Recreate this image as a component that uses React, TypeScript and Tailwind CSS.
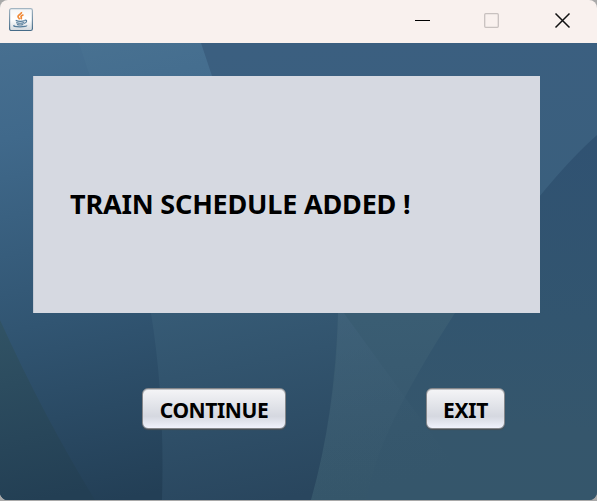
import React from "react";

function JavaIcon() {
  return (
    <svg width="24" height="24" viewBox="0 0 24 24" fill="none">
      <defs>
        <linearGradient id="tile" x1="0" y1="0" x2="0" y2="1">
          <stop offset="0" stopColor="#f4f5f6" />
          <stop offset="0.5" stopColor="#ffffff" />
          <stop offset="1" stopColor="#d3d8dd" />
        </linearGradient>
        <linearGradient id="tileEdge" x1="0" y1="0" x2="0" y2="1">
          <stop offset="0" stopColor="#a3b5c2" />
          <stop offset="1" stopColor="#456b88" />
        </linearGradient>
      </defs>
      <rect x="0.6" y="0.6" width="22.8" height="21.9" rx="1.8" fill="url(#tile)" stroke="url(#tileEdge)" strokeWidth="1.2" />
      <path d="M12.5 4c.5 2-3.800 2.900-3.500 4.700.200 1.100 1.300 1.700 1.700 2.600M14.500 6.800c-1.700.700-3 1.400-2.300 2.500.500.800.300 1.300-.300 2" stroke="#f08a38" strokeWidth="1.700" />
      <path d="M6.700 12.400c2.500 1 7 .900 9.400.100M7.200 14.600c2.200.700 5.700.700 7.800 0M8 16.500c2 .600 4.500.600 6.300 0M15.800 12.200c2.400-.600 2.600 2.300-.600 3.100M5.500 17.200c-2.400.900.800 1.600 5.500 1.600 4 0 7-.500 6.700-1.500" stroke="#557d9b" strokeWidth="1.200" />
    </svg>
  );
}

function TitleBar() {
  return (
    <header className="relative flex h-[43px] shrink-0 items-start bg-[#f9f1ee] pl-[9px] pt-2">
      <JavaIcon />
      <div className="ml-auto flex pr-[26px] pt-[4px]">
        <svg width="156" height="17" viewBox="0 0 156 17" fill="none">
          <path d="M0 8.500h15" stroke="#000" />
          <rect x="69.700" y="1.700" width="13.600" height="13.600" rx="1" stroke="#c8c1bf" strokeWidth="1.300" />
          <path d="M140.500 1.500l14 14M154.500 1.500l-14 14" stroke="#111" strokeWidth="1.500" />
        </svg>
      </div>
    </header>
  );
}

function Backdrop() {
  return (
    <svg className="absolute inset-0" width="597" height="457" viewBox="0 43 597 457">
      <defs>
        <linearGradient id="right" gradientUnits="userSpaceOnUse" x1="380" y1="43" x2="400" y2="500">
          <stop offset="0" stopColor="#3b5f80" />
          <stop offset="0.350" stopColor="#3a5f7d" />
          <stop offset="0.600" stopColor="#3a5d73" />
          <stop offset="0.800" stopColor="#38596f" />
          <stop offset="1" stopColor="#35566a" />
        </linearGradient>
        <linearGradient id="lower" gradientUnits="userSpaceOnUse" x1="520" y1="135" x2="500" y2="500">
          <stop offset="0" stopColor="#305272" />
          <stop offset="0.500" stopColor="#32556f" />
          <stop offset="0.800" stopColor="#35566c" />
          <stop offset="1" stopColor="#35566b" />
        </linearGradient>
        <linearGradient id="left" gradientUnits="userSpaceOnUse" x1="80" y1="40" x2="180" y2="520">
          <stop offset="0" stopColor="#487191" />
          <stop offset="0.200" stopColor="#426b8d" />
          <stop offset="0.550" stopColor="#375c77" />
          <stop offset="1" stopColor="#29465e" />
        </linearGradient>
        <linearGradient id="inner" gradientUnits="userSpaceOnUse" x1="20" y1="40" x2="120" y2="500">
          <stop offset="0" stopColor="#476f90" />
          <stop offset="0.200" stopColor="#40698b" />
          <stop offset="0.600" stopColor="#315572" />
          <stop offset="1" stopColor="#233f56" />
        </linearGradient>
        <linearGradient id="corner" gradientUnits="userSpaceOnUse" x1="0" y1="320" x2="40" y2="500">
          <stop offset="0" stopColor="#315365" />
          <stop offset="1" stopColor="#233f54" />
        </linearGradient>
        <linearGradient id="beam" gradientUnits="userSpaceOnUse" x1="340" y1="313" x2="380" y2="490">
          <stop offset="0" stopColor="#43657f" stopOpacity="0.500" />
          <stop offset="1" stopColor="#38596c" stopOpacity="0" />
        </linearGradient>
      </defs>
      <path d="M0 43h597v457H0z" fill="url(#right)" />
      <path d="M597 135Q540 185 455 313C405 390 375 450 366 500H597z" fill="url(#lower)" />
      <path d="M338 305L465 480L450 500H311C330 430 338 375 338 305z" fill="url(#beam)" />
      <path d="M0 43H201L212 76C240 150 338 230 338 313Q335 415 311 500H0z" fill="url(#left)" />
      <path d="M0 43H79L90 76Q130 200 151 313Q165 400 162 500H0z" fill="url(#inner)" />
      <path d="M0 320Q44 417 95 500H0z" fill="url(#corner)" />
    </svg>
  );
}

function PushButton({ children, className }: { children: React.ReactNode; className: string }) {
  return (
    <button
      className={`${className} flex h-[41px] items-center justify-center whitespace-nowrap rounded-[6px] border border-[#85878b] bg-linear-to-b from-[#f5f5f7] via-[#d5d8e0] via-70% to-[#f0f2fc] pt-[3px] text-[21px] font-bold leading-none text-black shadow-[0_1px_1px_#4b5056,inset_0_1px_0_#c5c6c9]`}
    >
      {children}
    </button>
  );
}

export default function App() {
  return (
    <div className="h-[501px] w-[597px] overflow-hidden bg-[#a9a9a9] font-['Noto_Sans','Open_Sans',sans-serif]">
      <div className="flex h-[500px] flex-col overflow-hidden rounded-[8px]">
        <TitleBar />
        <main className="relative flex-1">
          <Backdrop />
          <div className="relative pl-[33px] pt-[33px]">
            <section className="flex h-[237px] w-[507px] items-center border-l border-[#c3c9d3] bg-[#d6d9e1] pl-[36px] pt-[18px]">
              <h1 className="whitespace-nowrap text-[27px] font-bold leading-none tracking-[-0.19px] text-black">TRAIN SCHEDULE ADDED !</h1>
            </section>
            <div className="flex pl-[109px] pt-[75px]">
              <PushButton className="w-[144px] tracking-[-0.4px]">CONTINUE</PushButton>
              <PushButton className="ml-[140px] w-[79px] tracking-[-0.3px]">EXIT</PushButton>
            </div>
          </div>
        </main>
      </div>
    </div>
  );
}
